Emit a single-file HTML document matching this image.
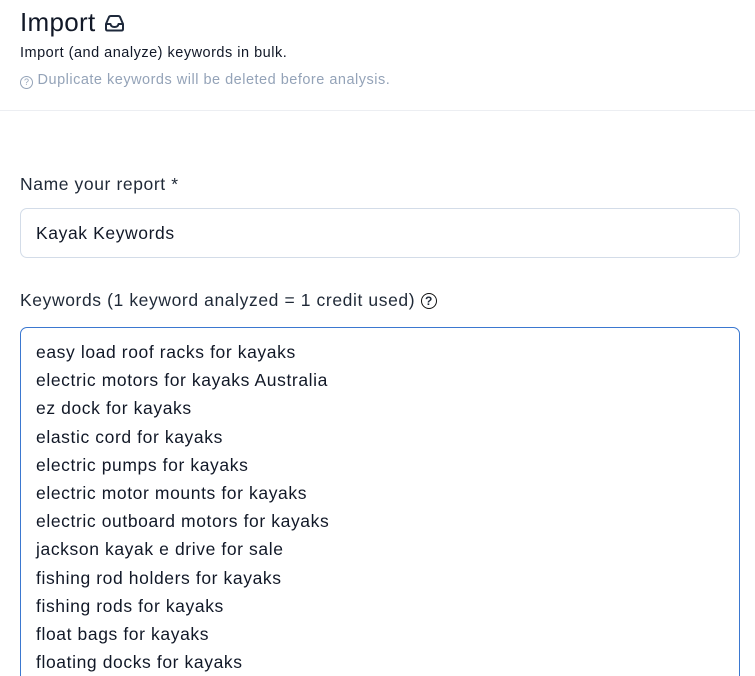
<!DOCTYPE html>
<html style="height:676px;overflow:hidden"><head><style>
body{margin:0;background:#fff;font-family:"Liberation Sans",sans-serif;color:#1f2937;width:755px;height:676px;overflow:hidden;position:relative}
.a{position:absolute;white-space:nowrap}
</style></head><body>
<div class="a" style="left:20px;top:7px;font-size:26px;color:#111827;letter-spacing:0.3px">Import
<svg width="21" height="18" viewBox="0 0 21 18" style="vertical-align:-1px;margin-left:1px"><path d="M2 10 L5 3 Q5.5 2 7 2 H14 Q15.5 2 16 3 L19 10 V15 Q19 16.5 17.5 16.5 H3.5 Q2 16.5 2 15 Z M2 10 H6.5 Q7 13 10.5 13 Q14 13 14.5 10 H19" fill="none" stroke="#1e293b" stroke-width="2" stroke-linejoin="round"/></svg></div>
<div class="a" style="left:20px;top:45px;font-size:14.5px;color:#111827;letter-spacing:0.5px">Import (and analyze) keywords in bulk.</div>
<div class="a" style="left:20px;top:72px;font-size:14.5px;color:#94a3b8;letter-spacing:0.5px"><span style="display:inline-block;width:11px;height:11px;border:1.3px solid #94a3b8;border-radius:50%;font-size:9px;text-align:center;line-height:11px;vertical-align:-1px;letter-spacing:0">?</span> Duplicate keywords will be deleted before analysis.</div>
<div class="a" style="left:0;top:110px;width:755px;height:1px;background:#eceef2"></div>
<div class="a" style="left:20px;top:174px;font-size:17.5px;color:#1f2937;letter-spacing:0.6px">Name your report *</div>
<div class="a" style="left:20px;top:208px;width:720px;height:50px;border:1px solid #d3dce8;border-radius:7px;box-sizing:border-box"></div>
<div class="a" style="left:36px;top:223px;font-size:17.5px;color:#111827;letter-spacing:0.6px">Kayak Keywords</div>
<div class="a" style="left:20px;top:290px;font-size:17.5px;color:#1f2937;letter-spacing:0.6px">Keywords (1 keyword analyzed = 1 credit used) <span style="display:inline-block;width:14px;height:14px;border:1.6px solid #111;border-radius:50%;font-size:12px;text-align:center;line-height:14px;vertical-align:1px;font-weight:bold;letter-spacing:0">?</span></div>
<div class="a" style="left:20px;top:327px;width:720px;height:380px;border:1px solid #3b78d0;border-radius:7px;box-sizing:border-box"></div>
<div class="a" style="left:36px;top:338px;font-size:17.5px;line-height:28.2px;color:#111827;letter-spacing:0.6px">easy load roof racks for kayaks<br>electric motors for kayaks Australia<br>ez dock for kayaks<br>elastic cord for kayaks<br>electric pumps for kayaks<br>electric motor mounts for kayaks<br>electric outboard motors for kayaks<br>jackson kayak e drive for sale<br>fishing rod holders for kayaks<br>fishing rods for kayaks<br>float bags for kayaks<br>floating docks for kayaks</div>
</body></html>
